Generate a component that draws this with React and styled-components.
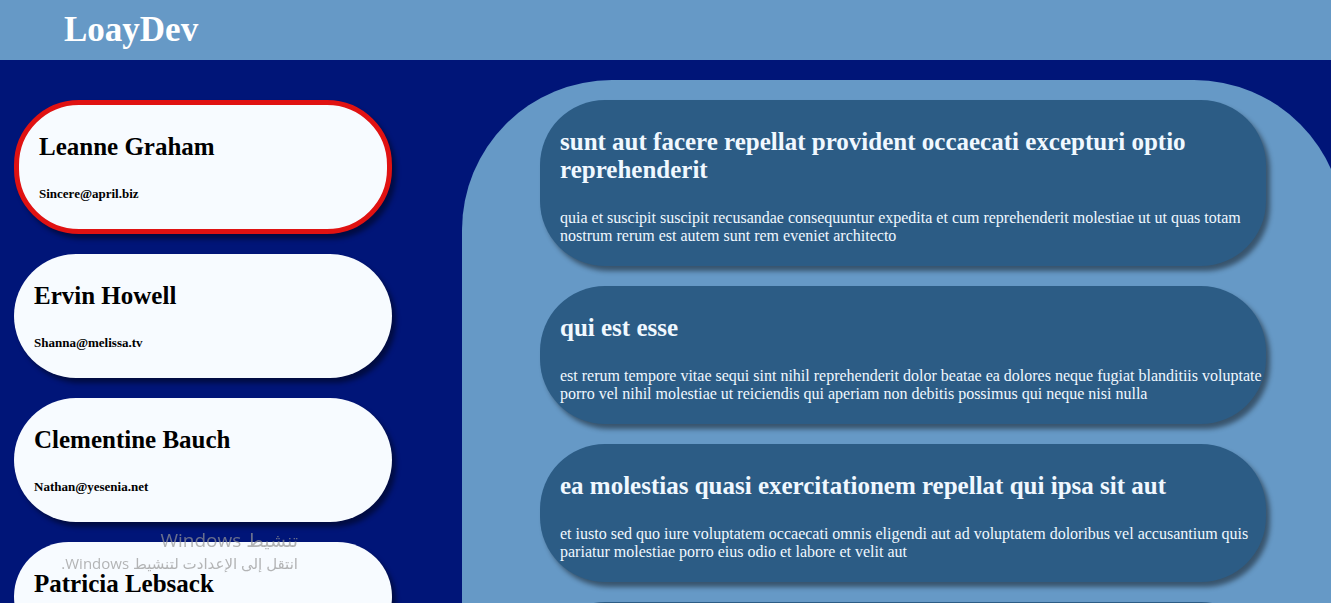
import React, { useState } from "react";
import styled, { createGlobalStyle } from "styled-components";

const GlobalStyle = createGlobalStyle`
  * {
    box-sizing: border-box;
  }
  body {
    margin: 0;
    background: #001578;
    font-family: "Liberation Serif", "Times New Roman", serif;
    font-size: 16px;
  }
`;

const Page = styled.div`
  display: flex;
  flex-direction: column;
  height: 100vh;
  overflow: hidden;
`;

const Navbar = styled.header`
  display: flex;
  flex: none;
  align-items: center;
  height: 60px;
  padding: 0 64px;
  background: #6699c6;
`;

const Brand = styled.h1`
  margin: 0;
  color: #fff;
  font-size: 35px;
  line-height: 40px;
`;

const Content = styled.main`
  display: grid;
  grid-template-columns: minmax(0, 3fr) minmax(0, 7fr);
  column-gap: 70px;
  align-items: start;
  padding: 20px 0 0 14px;
  margin-right: -13px;
`;

const UserList = styled.section`
  display: flex;
  flex-direction: column;
  gap: 20px;
  padding-top: 20px;
`;

const UserCard = styled.button`
  display: flex;
  flex-direction: column;
  gap: 25px;
  width: 100%;
  padding: 28px 20px;
  border: ${({ $active }) => ($active ? "5px solid #e01212" : "none")};
  border-radius: 65px;
  background: #f7fbff;
  box-shadow: 4px 5px 5px rgba(0, 0, 0, 0.45);
  color: #000;
  font-family: inherit;
  font-weight: bold;
  text-align: left;
  cursor: pointer;
`;

const UserName = styled.span`
  font-size: 25px;
  line-height: 28px;
`;

const UserEmail = styled.span`
  font-size: 13px;
  line-height: 15px;
`;

const PostPanel = styled.section`
  display: flex;
  flex-direction: column;
  gap: 20px;
  padding: 20px 78px;
  border-radius: 150px;
  background: #6699c6;
`;

const PostCard = styled.article`
  display: flex;
  flex-direction: column;
  gap: 25px;
  min-height: 138px;
  padding: 28px 0 21px 20px;
  border-radius: 65px;
  background: #2c5c85;
  box-shadow: 4px 5px 5px rgba(0, 0, 0, 0.45);
  color: #f0f8ff;
`;

const PostTitle = styled.h2`
  margin: 0;
  font-size: 25px;
  line-height: 28px;
`;

const PostBody = styled.p`
  margin: 0;
  font-size: 16px;
  line-height: 18px;
`;

const Watermark = styled.aside`
  position: fixed;
  top: 527px;
  left: 62px;
  width: 236px;
  color: rgba(150, 150, 150, 0.7);
  font-family: "Open Sans", "DejaVu Sans", sans-serif;
  pointer-events: none;
`;

const WatermarkTitle = styled.p`
  margin: 0;
  font-size: 19px;
  line-height: 26px;
  white-space: nowrap;
`;

const WatermarkText = styled.p`
  margin: 0;
  font-size: 15px;
  line-height: 20px;
  white-space: nowrap;
`;

const users = [
  { name: "Leanne Graham", email: "Sincere@april.biz" },
  { name: "Ervin Howell", email: "Shanna@melissa.tv" },
  { name: "Clementine Bauch", email: "Nathan@yesenia.net" },
  { name: "Patricia Lebsack", email: "" },
];

const posts = [
  {
    title: "sunt aut facere repellat provident occaecati excepturi optio reprehenderit",
    body: "quia et suscipit suscipit recusandae consequuntur expedita et cum reprehenderit molestiae ut ut quas totam nostrum rerum est autem sunt rem eveniet architecto",
  },
  {
    title: "qui est esse",
    body: "est rerum tempore vitae sequi sint nihil reprehenderit dolor beatae ea dolores neque fugiat blanditiis voluptate porro vel nihil molestiae ut reiciendis qui aperiam non debitis possimus qui neque nisi nulla",
  },
  {
    title: "ea molestias quasi exercitationem repellat qui ipsa sit aut",
    body: "et iusto sed quo iure voluptatem occaecati omnis eligendi aut ad voluptatem doloribus vel accusantium quis pariatur molestiae porro eius odio et labore et velit aut",
  },
  { title: "", body: "" },
];

export default function App() {
  const [selected, setSelected] = useState(0);

  return (
    <Page>
      <GlobalStyle />
      <Navbar>
        <Brand>LoayDev</Brand>
      </Navbar>
      <Content>
        <UserList>
          {users.map((user, index) => (
            <UserCard
              key={user.name}
              type="button"
              $active={index === selected}
              aria-pressed={index === selected}
              onClick={() => setSelected(index)}
            >
              <UserName>{user.name}</UserName>
              <UserEmail>{user.email}</UserEmail>
            </UserCard>
          ))}
        </UserList>
        <PostPanel>
          {posts.map((post, index) => (
            <PostCard key={index}>
              {post.title && <PostTitle>{post.title}</PostTitle>}
              {post.body && <PostBody>{post.body}</PostBody>}
            </PostCard>
          ))}
        </PostPanel>
      </Content>
      <Watermark dir="rtl" lang="ar">
        <WatermarkTitle>تنشيط Windows</WatermarkTitle>
        <WatermarkText>انتقل إلى الإعدادت لتنشيط Windows.</WatermarkText>
      </Watermark>
    </Page>
  );
}
